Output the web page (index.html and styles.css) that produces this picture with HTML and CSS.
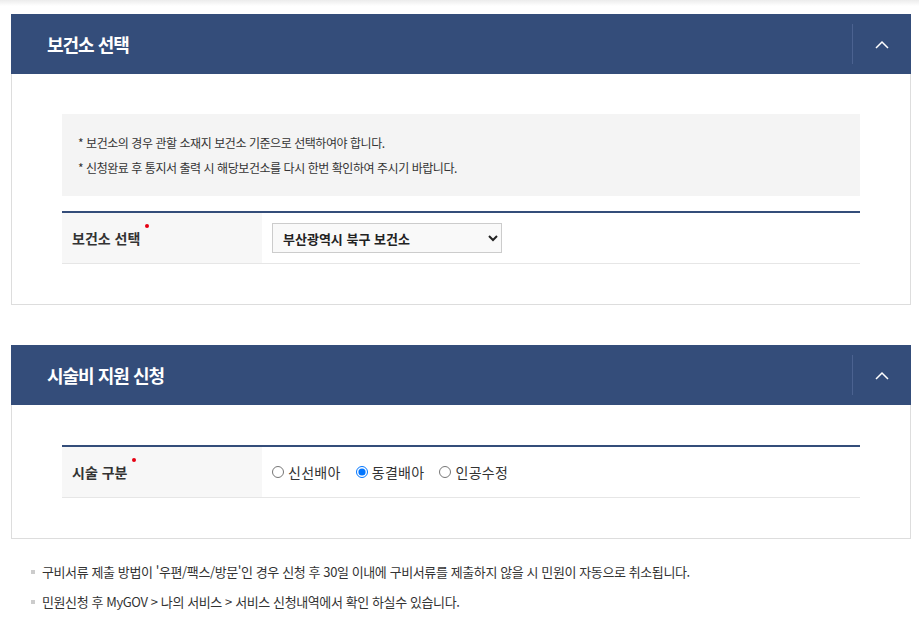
FILE: index.html
```html
<!DOCTYPE html>
<html lang="ko">
  <head>
    <meta charset="UTF-8" />
    <meta name="viewport" content="width=device-width, initial-scale=1.0" />
    <title>민원 신청</title>
    <link rel="stylesheet" href="styles.css">
  </head>
  <body>
    <div class="top-shadow"></div>
    <div class="wrap">
      <section class="panel">
        <div class="panel-head">
          <h3>보건소 선택</h3>
          <button type="button" class="toggle" aria-label="접기">
            <svg width="14" height="9" viewBox="0 0 14 9"><polyline points="1,8 7,2 13,8" fill="none" stroke="#fff" stroke-width="1.5" /></svg>
          </button>
        </div>
        <div class="panel-body">
          <div class="notice">
            <p>* 보건소의 경우 관할 소재지 보건소 기준으로 선택하여야 합니다.</p>
            <p>* 신청완료 후 통지서 출력 시 해당보건소를 다시 한번 확인하여 주시기 바랍니다.</p>
          </div>
          <div class="form-table">
            <div class="form-row">
              <div class="label"><span class="req">보건소 선택</span></div>
              <div class="field">
                <select class="select">
                  <option>부산광역시 북구 보건소</option>
                </select>
              </div>
            </div>
          </div>
        </div>
      </section>

      <section class="panel">
        <div class="panel-head">
          <h3>시술비 지원 신청</h3>
          <button type="button" class="toggle" aria-label="접기">
            <svg width="14" height="9" viewBox="0 0 14 9"><polyline points="1,8 7,2 13,8" fill="none" stroke="#fff" stroke-width="1.5" /></svg>
          </button>
        </div>
        <div class="panel-body">
          <div class="form-table">
            <div class="form-row">
              <div class="label"><span class="req">시술 구분</span></div>
              <div class="field radios">
                <label class="radio"><input type="radio" name="kind" />신선배아</label>
                <label class="radio"><input type="radio" name="kind" checked />동결배아</label>
                <label class="radio"><input type="radio" name="kind" />인공수정</label>
              </div>
            </div>
          </div>
        </div>
      </section>

      <ul class="notes">
        <li>구비서류 제출 방법이 '우편/팩스/방문'인 경우 신청 후 30일 이내에 구비서류를 제출하지 않을 시 민원이 자동으로 취소됩니다.</li>
        <li>민원신청 후 MyGOV &gt; 나의 서비스 &gt; 서비스 신청내역에서 확인 하실수 있습니다.</li>
      </ul>
    </div>
  </body>
</html>
```

FILE: styles.css
```css
* {
  margin: 0;
  padding: 0;
  box-sizing: border-box;
  font-family: "Noto Sans CJK KR", "Noto Sans", sans-serif;
}
body {
  background-color: #fff;
  color: #333;
  width: 919px;
}
.top-shadow {
  height: 6px;
  background: linear-gradient(#ececec, #fff);
}
.wrap {
  padding: 8px 8px 0 11px;
}
.panel {
  width: 900px;
  margin-bottom: 40px;
}
.panel-head {
  display: flex;
  align-items: center;
  height: 60px;
  background-color: #344d7a;
}
.panel-head h3 {
  flex: 1;
  padding-left: 36px;
  color: #fff;
  font-size: 18px;
  font-weight: bold;
  letter-spacing: -1px;
}
.toggle {
  display: flex;
  align-items: center;
  justify-content: center;
  width: 59px;
  height: 40px;
  border: none;
  border-left: 1px solid #4b6290;
  background: none;
  cursor: pointer;
}
.panel-body {
  padding: 40px 50px;
  border: 1px solid #ddd;
  border-top: none;
}
.notice {
  display: flex;
  flex-direction: column;
  justify-content: center;
  gap: 8px;
  height: 82px;
  margin-bottom: 15px;
  padding-left: 16px;
  background-color: #f4f4f4;
  font-size: 12px;
  letter-spacing: -0.45px;
  color: #333;
}
.form-table {
  border-top: 2px solid #344d7a;
}
.form-row {
  display: flex;
  height: 51px;
  border-bottom: 1px solid #e6e6e6;
}
.label {
  display: flex;
  align-items: center;
  width: 200px;
  padding-left: 10px;
  background-color: #f7f7f7;
  font-size: 14px;
  font-weight: bold;
  letter-spacing: 0;
}
.req {
  position: relative;
}
.req::after {
  content: "";
  position: absolute;
  top: -4px;
  right: -9px;
  width: 4px;
  height: 4px;
  border-radius: 50%;
  background-color: #e60012;
}
.field {
  display: flex;
  align-items: center;
  padding-left: 10px;
}
.select {
  width: 230px;
  height: 30px;
  padding: 0 6px;
  border: 1px solid #ccc;
  background-color: #f9f9f9;
  font-size: 13px;
  font-weight: bold;
  color: #222;
}
.radios {
  gap: 15px;
}
.radio {
  display: flex;
  align-items: center;
  font-size: 14px;
  letter-spacing: 0.3px;
}
.radio input {
  width: 12px;
  height: 12px;
  margin: 0 4px 0 0;
}
.notes {
  list-style: none;
  margin-top: -22px;
  padding-left: 20px;
}
.notes li {
  position: relative;
  padding-left: 11px;
  font-size: 13px;
  letter-spacing: -0.4px;
  line-height: 30px;
}
.notes li::before {
  content: "";
  position: absolute;
  left: 0;
  top: 13px;
  width: 4px;
  height: 4px;
  background-color: #ccc;
}
```
